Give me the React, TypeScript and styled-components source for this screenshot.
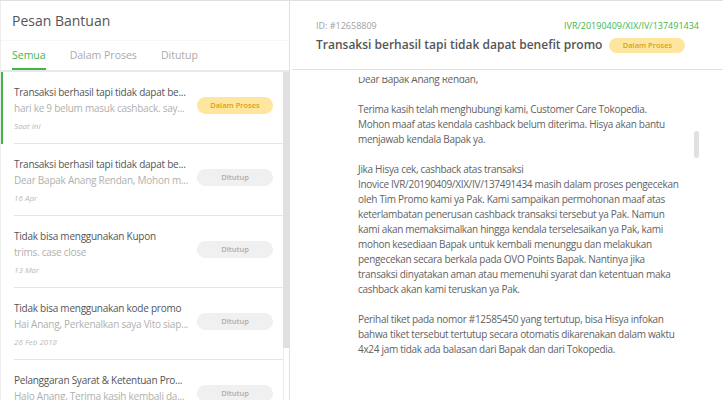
import React, { FC } from "react"
import styled, { createGlobalStyle } from "styled-components"

const GlobalStyle = createGlobalStyle`
  html, body {
    margin: 0;
    padding: 0;
    background: #fff;
  }
  body {
    font-family: "Open Sans", "Noto Sans", sans-serif;
    color: #555;
  }
`

const colors = {
  green: "#42b549",
  border: "#e0e0e0",
  text: "#555",
  muted: "#a8a8a8",
}

const Page = styled.div`
  display: flex;
  width: 723px;
  height: 400px;
  box-sizing: border-box;
  border-top: 1px solid ${colors.border};
  overflow: hidden;
`

const Sidebar = styled.aside`
  width: 290px;
  flex-shrink: 0;
  display: flex;
  flex-direction: column;
  box-sizing: border-box;
  border-right: 1px solid ${colors.border};
  border-left: 1px solid #ececec;
`

const SidebarTitle = styled.h1`
  margin: 0;
  padding: 10px 11px 9px;
  font-size: 14px;
  font-weight: 400;
  line-height: 20px;
  color: ${colors.text};
  border-bottom: 1px solid #f6f6f6;
`

const Tabs = styled.div`
  display: flex;
  gap: 24px;
  padding: 0 11px;
  border-bottom: 2px solid #e8e8e8;
`

const Tab = styled.div<{ active?: boolean }>`
  font-size: 10.5px;
  line-height: 15px;
  padding: 7px 0 5px;
  color: ${({ active }) => (active ? colors.green : "#aaa")};
  border-bottom: 2px solid
    ${({ active }) => (active ? colors.green : "transparent")};
`

const ListArea = styled.div`
  flex: 1;
  display: flex;
  min-height: 0;
  overflow: hidden;
`

const List = styled.div`
  flex: 1;
  min-width: 0;
`

const ScrollTrack = styled.div`
  width: 6px;
  flex-shrink: 0;
  box-sizing: border-box;
  border-left: 1px solid #ececec;
`

const TrackThumb = styled.div`
  height: 276px;
  margin-left: -1px;
  background: #e0e0e0;
`

const Item = styled.div<{ active?: boolean }>`
  display: flex;
  align-items: center;
  height: 72px;
  box-sizing: border-box;
  padding: 0 10px 0 11px;
  border-left: 2px solid
    ${({ active }) => (active ? colors.green : "transparent")};
  position: relative;
  &:not(:last-child)::after {
    content: "";
    position: absolute;
    left: 11px;
    right: 0;
    bottom: 0;
    height: 1px;
    background: #e6e6e6;
  }
`

const ItemText = styled.div`
  width: 177px;
  flex-shrink: 0;
  min-width: 0;
`

const ItemTitle = styled.div`
  font-size: 10px;
  letter-spacing: -0.25px;
  line-height: 15px;
  color: ${colors.text};
  white-space: nowrap;
  overflow: hidden;
  text-overflow: ellipsis;
`

const ItemPreview = styled(ItemTitle)`
  color: #b0b0b0;
  margin-top: 1px;
`

const ItemTime = styled.div`
  font-size: 8px;
  font-style: italic;
  line-height: 12px;
  margin-top: 4px;
  color: #bbb;
`

const Badge = styled.span<{ status: "proses" | "tutup"; small?: boolean }>`
  display: inline-flex;
  align-items: center;
  justify-content: center;
  flex-shrink: 0;
  width: 76px;
  height: ${({ small }) => (small ? "15px" : "17px")};
  border-radius: 9px;
  font-size: 7.5px;
  font-weight: 600;
  background: ${({ status }) => (status === "proses" ? "#fee69f" : "#f0f0f0")};
  color: ${({ status }) => (status === "proses" ? "#d9a117" : "#aeaeae")};
`

const ItemBadge = styled(Badge)`
  margin-left: auto;
  margin-top: -6px;
`

const Main = styled.main`
  flex: 1;
  display: flex;
  flex-direction: column;
  min-width: 0;
`

const DetailHeader = styled.header`
  height: 69px;
  box-sizing: border-box;
  margin-left: 2px;
  padding: 19px 24px 0 24px;
  border-bottom: 1px solid ${colors.border};
`

const MetaRow = styled.div`
  display: flex;
  justify-content: space-between;
  font-size: 9px;
  line-height: 12px;
`

const TicketId = styled.span`
  color: #a0a0a0;
`

const Invoice = styled.span`
  color: ${colors.green};
`

const TitleRow = styled.div`
  display: flex;
  align-items: center;
  gap: 7px;
  margin-top: 4px;
`

const DetailTitle = styled.h2`
  margin: 0;
  font-size: 12px;
  font-weight: 600;
  line-height: 18px;
  color: ${colors.text};
`

const Body = styled.div`
  flex: 1;
  position: relative;
  overflow: hidden;
  margin-top: 7px;
`

const Message = styled.div`
  padding-left: 68px;
  margin-top: -5px;
  font-size: 10px;
  letter-spacing: -0.3px;
  line-height: 15px;
  color: #626262;
`

const Paragraph = styled.p`
  margin: 0 0 15px;
  white-space: nowrap;
`

const ScrollThumb = styled.div`
  position: absolute;
  right: 24px;
  top: 54px;
  width: 5px;
  height: 27px;
  border-radius: 3px;
  background: #e0e0e0;
`

type Ticket = {
  title: string
  preview: string
  time: string
  status: "proses" | "tutup"
}

const tickets: Ticket[] = [
  {
    title: "Transaksi berhasil tapi tidak dapat be...",
    preview: "hari ke 9 belum masuk cashback. say...",
    time: "Saat ini",
    status: "proses",
  },
  {
    title: "Transaksi berhasil tapi tidak dapat be...",
    preview: "Dear Bapak Anang Rendan, Mohon m...",
    time: "16 Apr",
    status: "tutup",
  },
  {
    title: "Tidak bisa menggunakan Kupon",
    preview: "trims. case close",
    time: "13 Mar",
    status: "tutup",
  },
  {
    title: "Tidak bisa menggunakan kode promo",
    preview: "Hai Anang, Perkenalkan saya Vito siap...",
    time: "26 Feb 2018",
    status: "tutup",
  },
  {
    title: "Pelanggaran Syarat & Ketentuan Pro...",
    preview: "Halo Anang, Terima kasih kembali da...",
    time: "12 Feb 2018",
    status: "tutup",
  },
]

const paragraphs: string[][] = [
  ["Dear Bapak Anang Rendan,"],
  [
    "Terima kasih telah menghubungi kami, Customer Care Tokopedia.",
    "Mohon maaf atas kendala cashback belum diterima. Hisya akan bantu",
    "menjawab kendala Bapak ya.",
  ],
  [
    "Jika Hisya cek, cashback atas transaksi",
    "Inovice IVR/20190409/XIX/IV/137491434 masih dalam proses pengecekan",
    "oleh Tim Promo kami ya Pak. Kami sampaikan permohonan maaf atas",
    "keterlambatan penerusan cashback transaksi tersebut ya Pak. Namun",
    "kami akan memaksimalkan hingga kendala terselesaikan ya Pak, kami",
    "mohon kesediaan Bapak untuk kembali menunggu dan melakukan",
    "pengecekan secara berkala pada OVO Points Bapak. Nantinya jika",
    "transaksi dinyatakan aman atau memenuhi syarat dan ketentuan maka",
    "cashback akan kami teruskan ya Pak.",
  ],
  [
    "Perihal tiket pada nomor #12585450 yang tertutup, bisa Hisya infokan",
    "bahwa tiket tersebut tertutup secara otomatis dikarenakan dalam waktu",
    "4x24 jam tidak ada balasan dari Bapak dan dari Tokopedia.",
  ],
]

const statusLabel = (s: Ticket["status"]) =>
  s === "proses" ? "Dalam Proses" : "Ditutup"

const App: FC = () => {
  return (
    <>
      <GlobalStyle />
      <Page>
        <Sidebar>
          <SidebarTitle>Pesan Bantuan</SidebarTitle>
          <Tabs>
            <Tab active>Semua</Tab>
            <Tab>Dalam Proses</Tab>
            <Tab>Ditutup</Tab>
          </Tabs>
          <ListArea>
            <List>
              {tickets.map((t, i) => (
                <Item key={i} active={i === 0}>
                  <ItemText>
                    <ItemTitle>{t.title}</ItemTitle>
                    <ItemPreview>{t.preview}</ItemPreview>
                    <ItemTime>{t.time}</ItemTime>
                  </ItemText>
                  <ItemBadge status={t.status}>
                    {statusLabel(t.status)}
                  </ItemBadge>
                </Item>
              ))}
            </List>
            <ScrollTrack>
              <TrackThumb />
            </ScrollTrack>
          </ListArea>
        </Sidebar>
        <Main>
          <DetailHeader>
            <MetaRow>
              <TicketId>ID: #12658809</TicketId>
              <Invoice>IVR/20190409/XIX/IV/137491434</Invoice>
            </MetaRow>
            <TitleRow>
              <DetailTitle>
                Transaksi berhasil tapi tidak dapat benefit promo
              </DetailTitle>
              <Badge status="proses" small>
                Dalam Proses
              </Badge>
            </TitleRow>
          </DetailHeader>
          <Body>
            <Message>
              {paragraphs.map((lines, i) => (
                <Paragraph key={i}>
                  {lines.map((l, j) => (
                    <React.Fragment key={j}>
                      {j > 0 && <br />}
                      {l}
                    </React.Fragment>
                  ))}
                </Paragraph>
              ))}
            </Message>
            <ScrollThumb />
          </Body>
        </Main>
      </Page>
    </>
  )
}

export default App
